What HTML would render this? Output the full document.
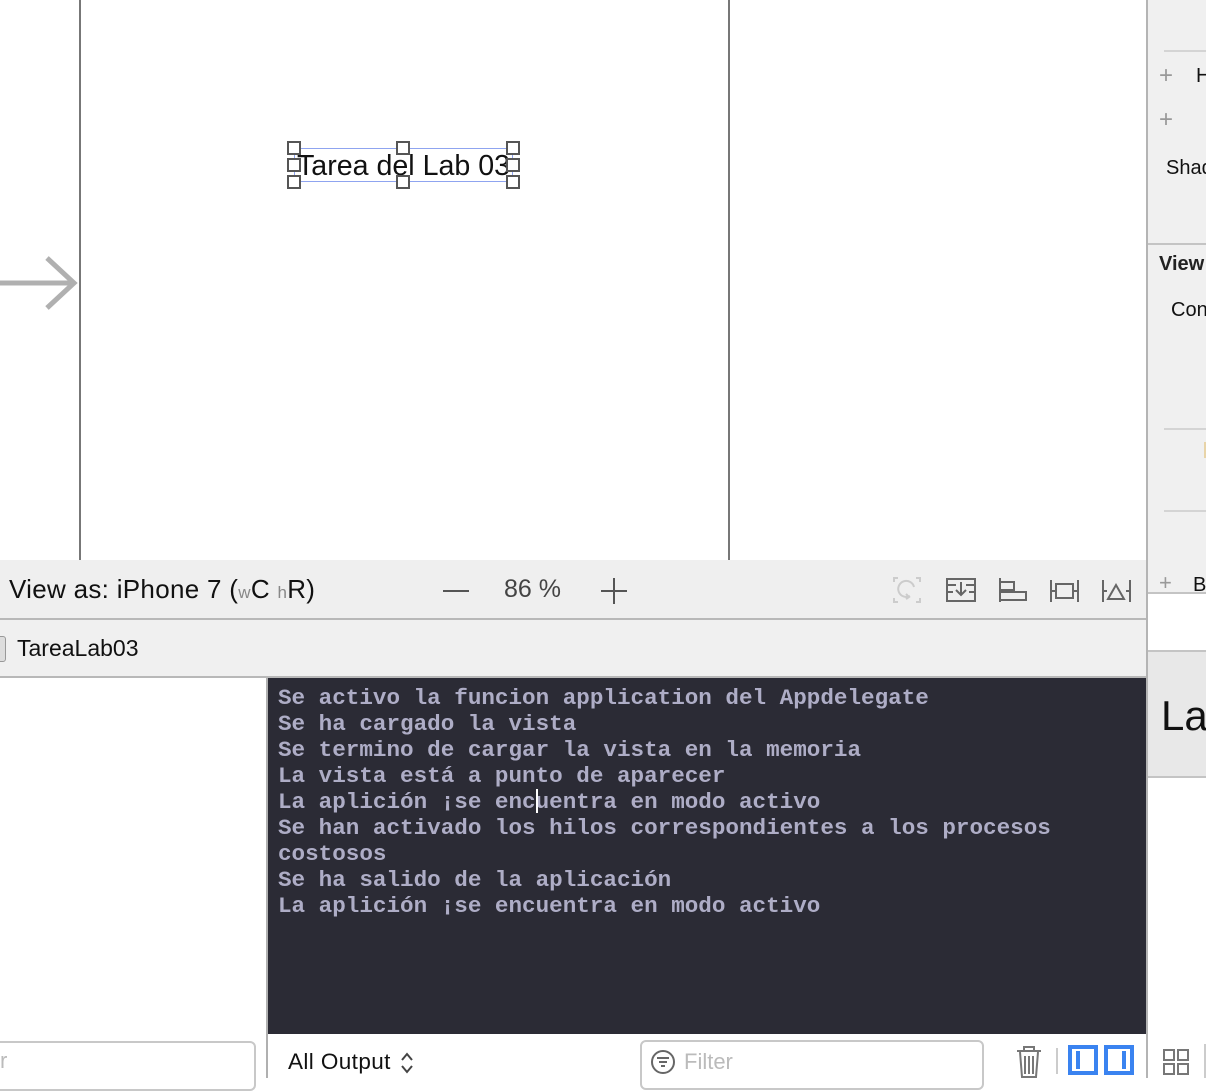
<!DOCTYPE html>
<html><head><meta charset="utf-8">
<style>
*{margin:0;padding:0;box-sizing:border-box}
body{width:1206px;height:1078px;overflow:hidden;position:relative;background:#fff;font-family:"Liberation Sans",sans-serif}
.a{position:absolute}
.con{position:absolute;left:278px;top:685px;font-family:"Liberation Mono",monospace;font-weight:bold;font-size:22.6px;line-height:26px;color:#aeadc6;white-space:pre}
</style></head><body>
<!-- canvas -->
<div class="a" style="left:79px;top:0;width:2px;height:560px;background:#777"></div>
<div class="a" style="left:728px;top:0;width:2px;height:560px;background:#777"></div>
<svg class="a" style="left:0;top:250px" width="80" height="66"><path d="M0 33H74M47 8L74 33L47 58" stroke="#b0b0b0" stroke-width="5" fill="none"/></svg>
<div class="a" style="left:294px;top:148px;width:219px;height:34px;border:1px solid #8fa4f0"></div>
<div class="a" style="left:297px;top:149px;font-size:28.6px;color:#111;line-height:34px">Tarea del Lab 03</div>
<svg class="a" style="left:286px;top:140px" width="236" height="50" fill="#fff" stroke="#555" stroke-width="2">
<rect x="2" y="2" width="12" height="12"/><rect x="111" y="2" width="12" height="12"/><rect x="221" y="2" width="12" height="12"/>
<rect x="2" y="19" width="12" height="12"/><rect x="221" y="19" width="12" height="12"/>
<rect x="2" y="36" width="12" height="12"/><rect x="111" y="36" width="12" height="12"/><rect x="221" y="36" width="12" height="12"/>
</svg>
<!-- toolbar -->
<div class="a" style="left:0;top:560px;width:1147px;height:60px;background:#efefef;border-bottom:2px solid #b8b8b8"></div>
<div class="a" style="left:9px;top:574px;font-size:26px;letter-spacing:0.3px;color:#111">View as: iPhone 7 (<span style="font-size:17px;color:#888">w</span>C <span style="font-size:17px;color:#888">h</span>R)</div>
<div class="a" style="left:443px;top:590px;width:26px;height:2px;background:#555"></div>
<div class="a" style="left:504px;top:575px;font-size:25px;color:#444">86 %</div>
<div class="a" style="left:601px;top:590px;width:26px;height:2px;background:#555"></div>
<div class="a" style="left:613px;top:578px;width:2px;height:26px;background:#555"></div>
<svg class="a" style="left:890px;top:574px" width="250" height="32" fill="none" stroke="#666" stroke-width="2">
<path d="M4 8V4H8M26 4H30V8M30 24V28H26M8 28H4V24" stroke="#ccc"/><path d="M24 13A8 8 0 1 0 20 22M16 20L19 23L16 25" stroke="#ccc"/>
<rect x="57" y="5" width="28" height="22"/><path d="M57 11H66M76 11H85M71 8V20M66 16L71 21L76 16M57 18H63M79 18H85"/>
<path d="M110 4V28"/><rect x="110" y="8" width="14" height="8"/><rect x="110" y="18" width="26" height="8"/>
<path d="M161 6V28M188 6V28M161 17H166M183 17H188"/><rect x="166" y="10" width="17" height="14"/>
<path d="M213 6V28M240 6V28M213 17H217M236 17H240M218 25L226 11L234 25Z"/>
</svg>
<!-- second bar -->
<div class="a" style="left:0;top:620px;width:1147px;height:58px;background:#f0f0f0;border-bottom:2px solid #b8b8b8"></div>
<div class="a" style="left:-6px;top:636px;width:12px;height:26px;border:1px solid #999;border-radius:3px;background:#ddd"></div>
<div class="a" style="left:17px;top:635px;font-size:23px;color:#111">TareaLab03</div>
<!-- console -->
<div class="a" style="left:266px;top:678px;width:2px;height:400px;background:#b0b0b0"></div>
<div class="a" style="left:268px;top:678px;width:879px;height:356px;background:#2b2b35"></div>
<div class="con">Se activo la funcion application del Appdelegate
Se ha cargado la vista
Se termino de cargar la vista en la memoria
La vista está a punto de aparecer
La aplición ¡se encuentra en modo activo
Se han activado los hilos correspondientes a los procesos
costosos
Se ha salido de la aplicación
La aplición ¡se encuentra en modo activo</div>
<div class="a" style="left:536px;top:789px;width:2px;height:24px;background:#fff"></div>
<!-- bottom -->
<div class="a" style="left:-10px;top:1041px;width:266px;height:50px;border:2px solid #c8c8c8;border-radius:6px"></div>
<div class="a" style="left:0px;top:1048px;font-size:22px;color:#bbb">r</div>
<div class="a" style="left:288px;top:1049px;font-size:22.5px;letter-spacing:0.4px;color:#111">All Output</div>
<svg class="a" style="left:400px;top:1051px" width="14" height="24" fill="none" stroke="#444" stroke-width="2"><path d="M2 9L7 3L12 9M2 15L7 21L12 15"/></svg>
<div class="a" style="left:640px;top:1040px;width:344px;height:50px;border:2px solid #c8c8c8;border-radius:6px"></div>
<svg class="a" style="left:650px;top:1049px" width="26" height="26" fill="none" stroke="#666" stroke-width="2"><circle cx="13" cy="13" r="11"/><path d="M7 9H19M9 13H17M11 17H15"/></svg>
<div class="a" style="left:684px;top:1049px;font-size:22px;color:#bbb">Filter</div>
<svg class="a" style="left:1014px;top:1044px" width="30" height="34" fill="none" stroke="#777" stroke-width="2"><path d="M3 7H27M10 7V3H20V7M6 8L8 33H22L24 8M11 12V30M15 12V30M19 12V30"/></svg>
<div class="a" style="left:1056px;top:1048px;width:2px;height:26px;background:#ccc"></div>
<div class="a" style="left:1068px;top:1045px;width:30px;height:30px;border:4px solid #3a83f0"></div>
<div class="a" style="left:1076px;top:1051px;width:4px;height:18px;background:#3a83f0"></div>
<div class="a" style="left:1104px;top:1045px;width:30px;height:30px;border:4px solid #3a83f0"></div>
<div class="a" style="left:1122px;top:1051px;width:4px;height:18px;background:#3a83f0"></div>
<!-- right panel -->
<div class="a" style="left:1146px;top:0;width:60px;height:593px;background:#f0f0f0"></div>
<div class="a" style="left:1146px;top:0;width:2px;height:1078px;background:#b4b4b4"></div>
<div class="a" style="left:1164px;top:50px;width:42px;height:2px;background:#d4d4d4"></div>
<div class="a" style="left:1159px;top:62px;font-size:24px;color:#999">+</div>
<div class="a" style="left:1196px;top:65px;font-size:20px;color:#111">H</div>
<div class="a" style="left:1159px;top:106px;font-size:24px;color:#999">+</div>
<div class="a" style="left:1166px;top:157px;font-size:20px;color:#111">Shad</div>
<div class="a" style="left:1148px;top:243px;width:58px;height:2px;background:#c4c4c4"></div>
<div class="a" style="left:1159px;top:253px;font-size:20px;font-weight:bold;color:#222">View</div>
<div class="a" style="left:1171px;top:299px;font-size:20px;color:#111">Con</div>
<div class="a" style="left:1164px;top:428px;width:42px;height:2px;background:#d4d4d4"></div>
<div class="a" style="left:1204px;top:442px;width:2px;height:16px;background:#e8d4a8"></div>
<div class="a" style="left:1164px;top:510px;width:42px;height:2px;background:#d4d4d4"></div>
<div class="a" style="left:1159px;top:570px;font-size:22px;color:#999">+</div>
<div class="a" style="left:1193px;top:574px;font-size:20px;color:#111">B</div>
<div class="a" style="left:1148px;top:592px;width:58px;height:2px;background:#c4c4c4"></div>
<div class="a" style="left:1148px;top:650px;width:58px;height:128px;background:#e8e8e8;border-top:2px solid #c4c4c4;border-bottom:2px solid #c4c4c4"></div>
<div class="a" style="left:1161px;top:692px;font-size:42px;color:#111">La</div>
<svg class="a" style="left:1162px;top:1048px" width="28" height="28" fill="none" stroke="#777" stroke-width="2"><rect x="2" y="2" width="10" height="10"/><rect x="16" y="2" width="10" height="10"/><rect x="2" y="16" width="10" height="10"/><rect x="16" y="16" width="10" height="10"/></svg>
<div class="a" style="left:1204px;top:1044px;width:2px;height:34px;background:#ccc"></div>
</body></html>
